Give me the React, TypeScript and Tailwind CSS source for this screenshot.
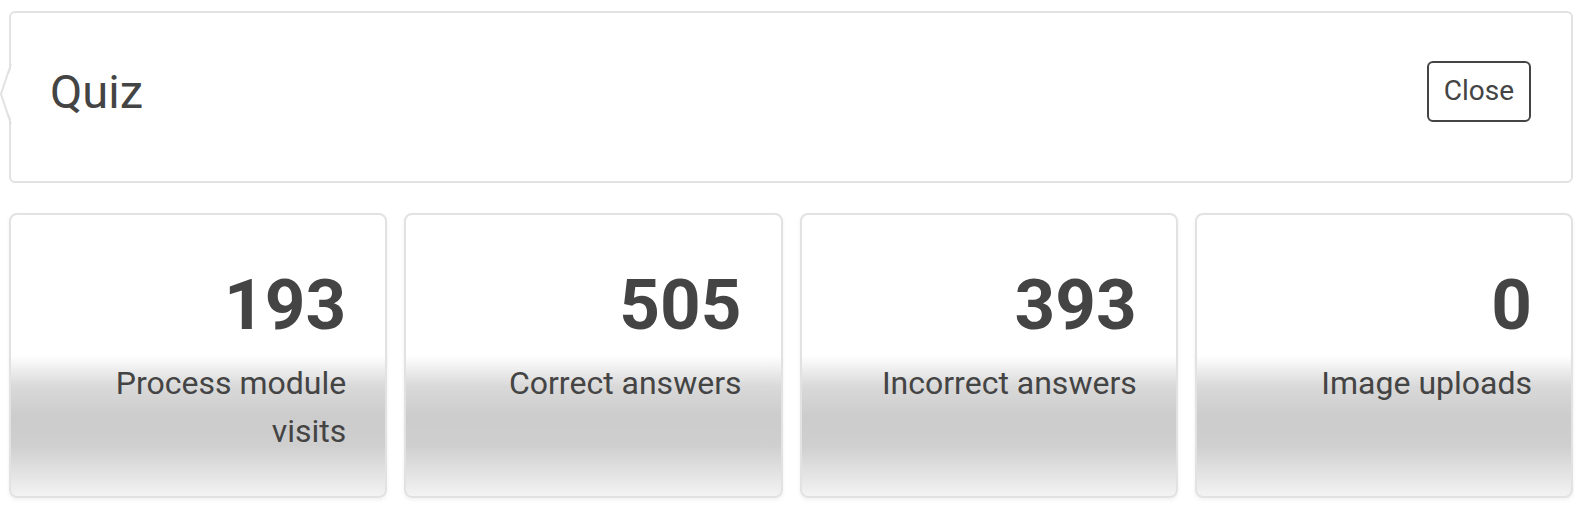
import React from 'react';

const stats = [
  { value: '193', label: 'Process module visits' },
  { value: '505', label: 'Correct answers' },
  { value: '393', label: 'Incorrect answers' },
  { value: '0', label: 'Image uploads' },
];

function StatCard({ value, label }: { value: string; label: string }) {
  return (
    <div className="h-[285px] rounded-lg border-2 border-[#e2e2e2] bg-[linear-gradient(to_bottom,#ffffff_50%,#d9d9d9_61%,#cccccc_72%,#cfcfcf_82%,#f3f3f3_100%)] pt-[54px] pr-[39px] pl-6 text-right text-[#444] shadow-[0_2px_4px_rgba(0,0,0,0.06)]">
      <div className="text-[71px] font-bold leading-none">{value}</div>
      <div className="mt-[19px] ml-auto max-w-[260px] text-[32px] leading-[48px]">{label}</div>
    </div>
  );
}

export default function App() {
  return (
    <div className="min-h-[522px] bg-white px-[9px] pt-[11px] font-['Roboto','Liberation_Sans',sans-serif]">
      <div className="relative flex h-[172px] items-center justify-between rounded-md border-2 border-[#e2e2e2] pr-[40px] pb-[12px] pl-[39px]">
        <svg
          className="absolute top-[51px] left-[-11px]"
          width="13"
          height="60"
          viewBox="0 0 13 60"
        >
          <polygon points="13,0 1,30 13,60" fill="#ffffff" />
          <polyline points="11,0 1,30 11,60" fill="none" stroke="#e2e2e2" strokeWidth="2" />
        </svg>
        <h1 className="text-[47px] leading-none text-[#444]">Quiz</h1>
        <button className="h-[61px] rounded-md border-2 border-[#444] px-[15px] text-[28px] text-[#444]">
          Close
        </button>
      </div>

      <div className="mt-[30px] grid grid-cols-4 gap-[17px]">
        {stats.map((s) => (
          <StatCard key={s.label} value={s.value} label={s.label} />
        ))}
      </div>
    </div>
  );
}
